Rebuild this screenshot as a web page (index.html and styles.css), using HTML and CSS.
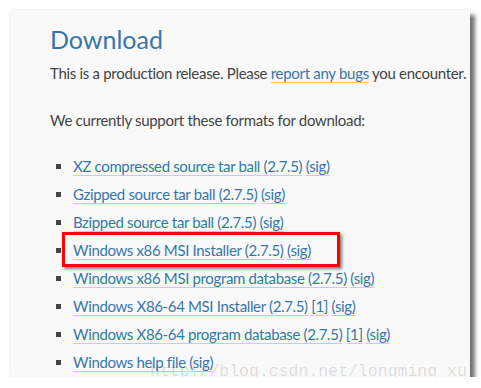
FILE: index.html
```html
<!DOCTYPE html>
<html lang="en">
    <head>
        <meta charset="UTF-8">
        <title>Download</title>
        <link rel="stylesheet" href="styles.css">
    </head>
    <body>
        <div class="shot">
            <h1>Download</h1>
            <p class="intro">This is a production release. Please <a href="#">report any bugs</a> you encounter.</p>
            <p class="lead">We currently support these formats for download:</p>
            <ul class="files">
                <li><a href="#">XZ compressed source tar ball (2.7.5)</a> <a href="#">(sig)</a></li>
                <li><a href="#">Gzipped source tar ball (2.7.5)</a> <a href="#">(sig)</a></li>
                <li><a href="#">Bzipped source tar ball (2.7.5)</a> <a href="#">(sig)</a></li>
                <li class="marked"><a href="#">Windows x86 MSI Installer (2.7.5)</a> <a href="#">(sig)</a><span class="mark"></span></li>
                <li><a href="#">Windows x86 MSI program database (2.7.5)</a> <a href="#">(sig)</a></li>
                <li><a href="#">Windows X86-64 MSI Installer (2.7.5)</a> <a href="#">[1]</a> <a href="#">(sig)</a></li>
                <li><a href="#">Windows X86-64 program database (2.7.5)</a> <a href="#">[1]</a> <a href="#">(sig)</a></li>
                <li><a href="#">Windows help file</a> <a href="#">(sig)</a></li>
            </ul>
            <div class="watermark">http://blog.csdn.net/longming_xu</div>
        </div>
    </body>
</html>
```

FILE: styles.css
```css
body {
    margin: 0;
    background-color: #fff;
    font-family: Lato, "Open Sans", sans-serif;
    color: #444;
}
.shot {
    position: relative;
    box-sizing: border-box;
    width: 460px;
    height: 367px;
    margin: 10px 0 0 10px;
    padding: 0 0 0 40px;
    overflow: hidden;
    background-color: #f9f9f9;
    box-shadow: 0 0 2px rgba(0, 0, 0, 0.12), 5px 5px 4px rgba(0, 0, 0, 0.55);
}
h1 {
    margin: 0;
    padding-top: 12px;
    font-size: 25px;
    font-weight: 400;
    line-height: 34px;
    color: #3776ab;
}
p {
    margin: 0;
    font-size: 15px;
    letter-spacing: -0.3px;
    line-height: 22px;
}
.intro {
    margin-top: 6px;
}
.lead {
    margin-top: 25px;
}
a {
    color: #3776ab;
    text-decoration: none;
    border-bottom: 1px solid #ffd343;
}
.files {
    margin: 21px 0 0 0;
    padding-left: 23px;
    list-style: square;
    font-size: 15px;
    letter-spacing: -0.35px;
}
.files li {
    line-height: 28px;
}
.marked {
    position: relative;
}
.mark {
    position: absolute;
    left: -11px;
    top: -4px;
    width: 272px;
    height: 29px;
    border: 3px solid #f00;
    box-shadow: 2px 2px 3px rgba(0, 0, 0, 0.5);
}
.watermark {
    position: absolute;
    left: 140px;
    top: 352px;
    font-family: "Liberation Mono", monospace;
    font-size: 16.5px;
    letter-spacing: 0;
    color: rgba(0, 0, 0, 0.13);
    white-space: nowrap;
}
```
